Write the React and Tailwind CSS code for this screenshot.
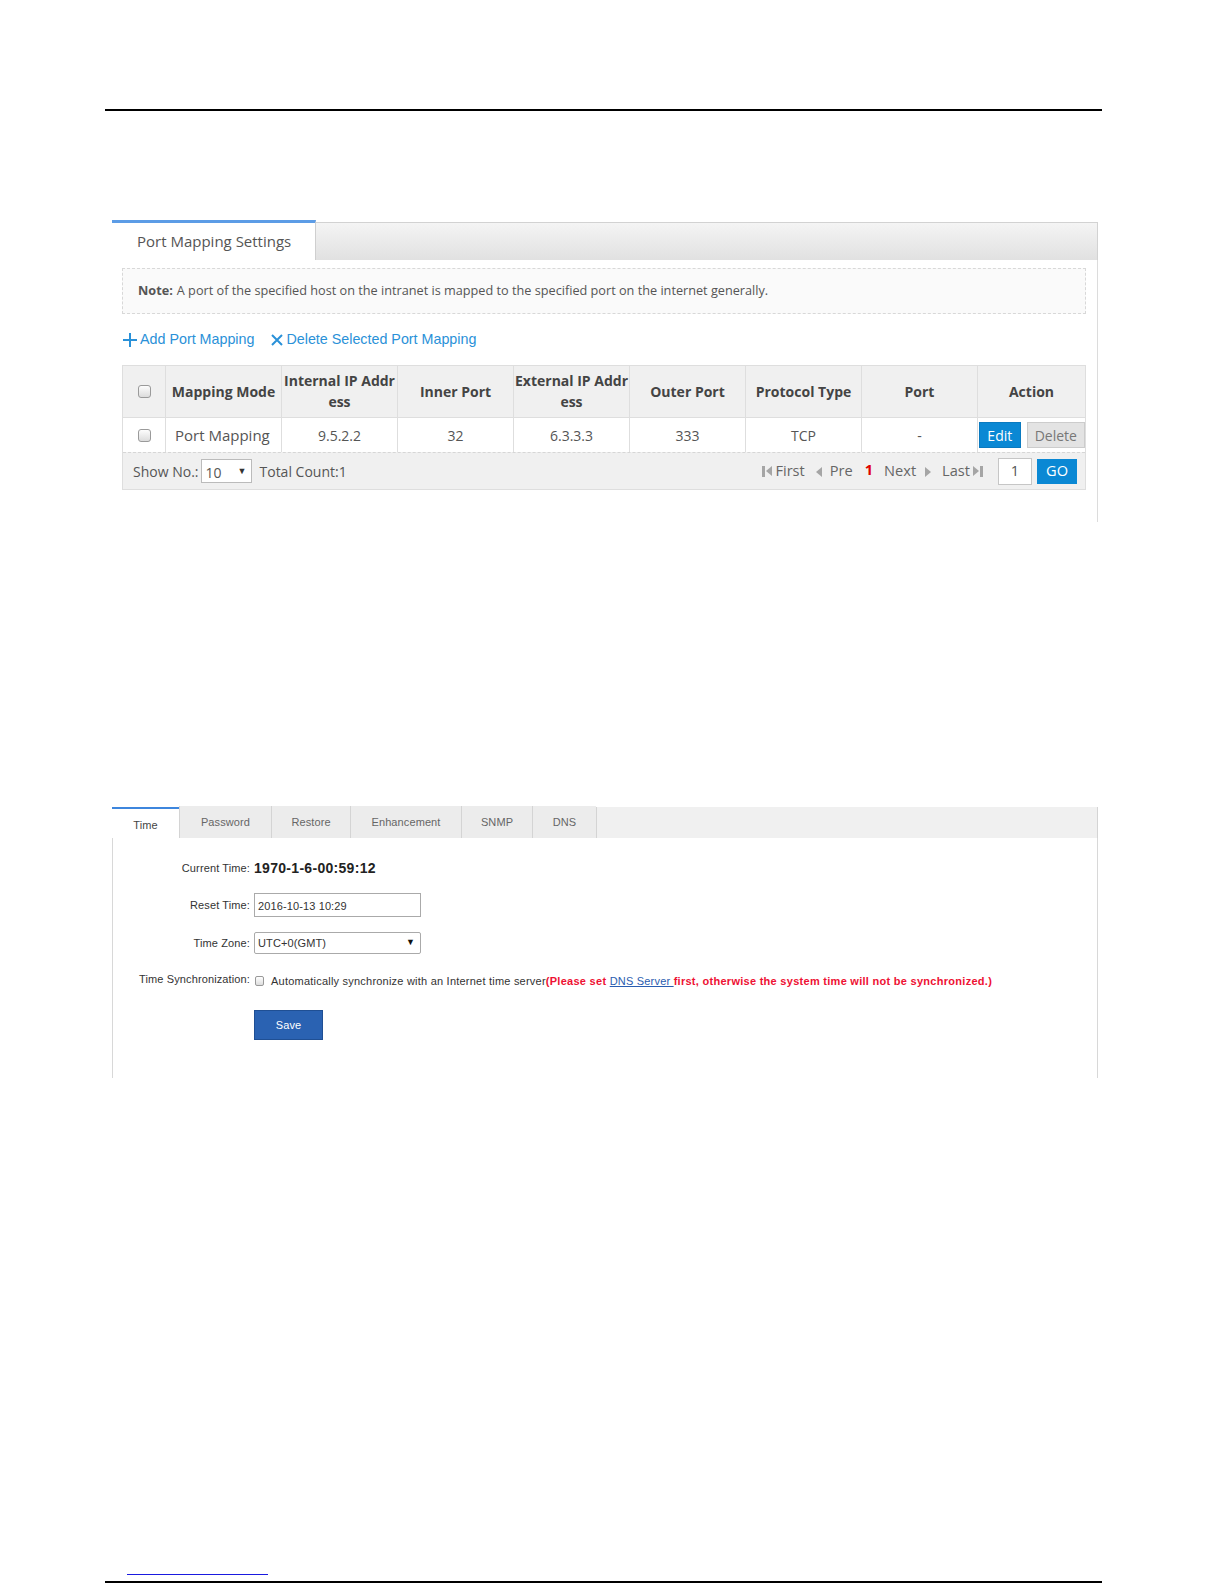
import React from "react";

const os = { fontFamily: '"Open Sans", "Noto Sans", sans-serif' };
const ls = { fontFamily: '"Liberation Sans", Arial, sans-serif' };

function Check() {
  return (
    <span className="inline-block w-[13px] h-[13px] rounded-[3px] border border-[#9a9a9a] bg-gradient-to-b from-[#fdfdfd] to-[#dcdcdc]" />
  );
}

function Tri({ dir }) {
  return (
    <svg width="6" height="10" viewBox="0 0 6 10" className="inline-block">
      {dir === "left" ? <polygon points="6,0 6,10 0,5" fill="#a5a5a5" /> : <polygon points="0,0 0,10 6,5" fill="#a5a5a5" />}
    </svg>
  );
}

function Bar() {
  return <span className="inline-block w-[3px] h-[11px] bg-[#a5a5a5]" />;
}

const headCols = [
  "Mapping Mode",
  ["Internal IP Addr", "ess"],
  "Inner Port",
  ["External IP Addr", "ess"],
  "Outer Port",
  "Protocol Type",
  "Port",
  "Action",
];

const rowVals = ["9.5.2.2", "32", "6.3.3.3", "333", "TCP", "-"];

export default function App() {
  return (
    <div className="w-[1225px] h-[1585px] bg-white flex flex-col relative overflow-hidden">
      {/* top rule */}
      <div className="mt-[109px] ml-[105px] w-[997px] h-[2px] bg-black" />

      {/* Screenshot 1 */}
      <div className="mt-[109px] ml-[112px] w-[986px] h-[302px] flex flex-col" style={os}>
        <div className="flex h-[40px]">
          <div className="w-[204px] border-t-[3px] border-[#5c9ce6] border-r border-r-[#cfcfcf] bg-white flex items-center pl-[25px] text-[15px] text-[#555]">
            Port Mapping Settings
          </div>
          <div className="flex-1 mt-[2px] border-t border-r border-[#d2d2d2] bg-gradient-to-b from-[#f4f4f4] to-[#e1e1e1]" />
        </div>
        <div className="flex-1 border-r border-[#dcdcdc] pl-[10px] pr-[11px] flex flex-col">
          <div className="mt-[8px] h-[46px] border border-dashed border-[#d8d8d8] bg-[#fafafa] flex items-center pl-[15px] text-[12.7px] text-[#555]">
            <span className="font-bold mr-[4px]">Note:</span>
            A port of the specified host on the intranet is mapped to the specified port on the internet generally.
          </div>
          <div className="mt-[16px] h-[20px] flex items-center text-[14.3px] text-[#2a91d8]" style={ls}>
            <svg width="16" height="16" viewBox="0 0 16 16" className="mr-[2px]">
              <path d="M8 1v14M1 8h14" stroke="#2a91d8" strokeWidth="2" />
            </svg>
            <span>Add Port Mapping</span>
            <svg width="14" height="14" viewBox="0 0 14 14" className="ml-[16px] mr-[2px]">
              <path d="M2 2l10 10M12 2L2 12" stroke="#2a91d8" strokeWidth="2" />
            </svg>
            <span>Delete Selected Port Mapping</span>
          </div>

          {/* table */}
          <div className="mt-[15px] w-[964px] border border-[#dedede]">
            <div className="grid grid-cols-[43px_116px_116px_116px_116px_116px_116px_116px_107px] h-[51px] bg-[#f0f0f0] text-[14px] font-bold text-[#444]">
              <div className="flex items-center justify-center border-r border-[#dedede]"><Check /></div>
              {headCols.map((h, i) => (
                <div key={i} className={"flex items-center justify-center text-center leading-[21px] " + (i < 7 ? "border-r border-[#dedede]" : "")}>
                  {Array.isArray(h) ? (
                    <span className="-mt-[2px]">{h[0]}<br />{h[1]}</span>
                  ) : (
                    <span>{h}</span>
                  )}
                </div>
              ))}
            </div>
            <div className="grid grid-cols-[43px_116px_116px_116px_116px_116px_116px_116px_107px] h-[35px] bg-white border-t border-[#dedede] text-[14px] text-[#555]">
              <div className="flex items-center justify-center border-r border-[#dedede]"><Check /></div>
              <div className="flex items-center pl-[9px] text-[15px] border-r border-[#dedede]">Port Mapping</div>
              {rowVals.map((v, i) => (
                <div key={i} className="flex items-center justify-center border-r border-[#dedede]">{v}</div>
              ))}
              <div className="flex items-center pl-[1px] gap-[6px]">
                <span className="w-[42px] h-[26px] bg-[#0a88d4] text-white flex items-center justify-center border border-[#0a7ac0]">Edit</span>
                <span className="w-[59px] h-[26px] bg-[#e3e3e3] text-[#777] flex items-center justify-center border border-[#cccccc]">Delete</span>
              </div>
            </div>
            <div className="h-[37px] bg-[#f0f0f0] border-t border-dashed border-[#d6d6d6] flex items-center text-[14px] text-[#555]">
              <span className="ml-[10px]">Show No.:</span>
              <span className="ml-[2px] w-[51px] h-[24px] bg-white border border-[#bbb] flex items-center justify-between px-[4px] text-[14px]">
                <span className="mt-[2px]">10</span>
                <span className="text-[9px] text-[#333]">▼</span>
              </span>
              <span className="ml-[8px]">Total Count:1</span>
              <div className="ml-auto flex items-center text-[14.6px]">
                <span className="flex items-center gap-[1px] mr-[3px]"><Bar /><Tri dir="left" /></span>
                <span className="text-[#666]">First</span>
                <span className="ml-[11px] mr-[8px]"><Tri dir="left" /></span>
                <span className="text-[#666]">Pre</span>
                <span className="ml-[12px] text-[#e00000] font-bold -mt-[3px]">1</span>
                <span className="ml-[11px] text-[#666]">Next</span>
                <span className="ml-[9px] mr-[11px]"><Tri dir="right" /></span>
                <span className="text-[#666]">Last</span>
                <span className="flex items-center gap-[1px] ml-[3px]"><Tri dir="right" /><Bar /></span>
                <span className="ml-[15px] w-[34px] h-[27px] bg-white border border-[#c6c6c6] flex items-center justify-center">1</span>
                <span className="ml-[5px] mr-[8px] w-[40px] h-[25px] bg-[#0a88d4] text-white flex items-center justify-center">GO</span>
              </div>
            </div>
          </div>
        </div>
      </div>

      {/* Screenshot 2 */}
      <div className="mt-[285px] ml-[112px] w-[986px] h-[271px] flex flex-col" style={ls}>
        <div className="flex h-[31px] bg-[#efefef] text-[11px] text-[#666] tracking-[0.1px]">
          <div className="w-[67px] border-t-[2px] border-[#3d86dd] bg-white flex items-center justify-center pt-[3px] text-[#444]">Time</div>
          {[["Password", 92], ["Restore", 79], ["Enhancement", 111], ["SNMP", 71], ["DNS", 64]].map(([t, w]) => (
            <div key={t} style={{ width: w }} className="border-l border-[#d4d4d4] bg-[#ececec] flex items-center justify-center -mt-[1px]">{t}</div>
          ))}
          <div className="flex-1 border-l border-r border-[#d4d4d4] bg-[#f0f0f0]" />
        </div>
        <div className="flex-1 border-l border-r border-[#d8d8d8] bg-white flex flex-col text-[11px] text-[#333] tracking-[0.12px]">
          <div className="mt-[20px] h-[20px] flex items-center">
            <span className="w-[137px] text-right">Current Time:</span>
            <span className="ml-[4px] text-[14px] font-bold text-[#222] tracking-[0.3px]">1970-1-6-00:59:12</span>
          </div>
          <div className="mt-[15px] h-[24px] flex items-center">
            <span className="w-[137px] text-right">Reset Time:</span>
            <span className="ml-[4px] w-[167px] h-[24px] border border-[#aaa] flex items-center pl-[3px] pt-[3px]">2016-10-13 10:29</span>
          </div>
          <div className="mt-[15px] h-[22px] flex items-center">
            <span className="w-[137px] text-right">Time Zone:</span>
            <span className="ml-[4px] w-[167px] h-[22px] border border-[#aaa] rounded-[2px] flex items-center justify-between pl-[3px] pr-[5px]">
              <span>UTC+0(GMT)</span>
              <span className="text-[9px] text-[#111]">▼</span>
            </span>
          </div>
          <div className="mt-[18px] h-[18px] flex items-center whitespace-pre">
            <span className="w-[137px] text-right -mt-[4px]">Time Synchronization:</span>
            <span className="ml-[5px] w-[9px] h-[10px] rounded-[2px] border border-[#999] bg-gradient-to-b from-white to-[#ddd]" />
            <span className="ml-[7px] tracking-[0.22px]">Automatically synchronize with an Internet time server</span>
            <span className="text-[#ee1133] font-bold tracking-[0.28px]">(Please set </span>
            <span className="text-[#2a5db0] underline tracking-[0.2px]">DNS Server </span>
            <span className="text-[#ee1133] font-bold tracking-[0.28px]">first, otherwise the system time will not be synchronized.)</span>
          </div>
          <div className="mt-[20px] ml-[141px] w-[69px] h-[30px] bg-[#2a62b2] border border-[#1f4f94] text-white flex items-center justify-center">Save</div>
        </div>
      </div>

      {/* footer */}
      <div className="mt-[496px] ml-[127px] w-[141px] h-[1px] bg-[#1a1ae0]" />
      <div className="mt-[6px] ml-[105px] w-[997px] h-[2px] bg-black" />
    </div>
  );
}
